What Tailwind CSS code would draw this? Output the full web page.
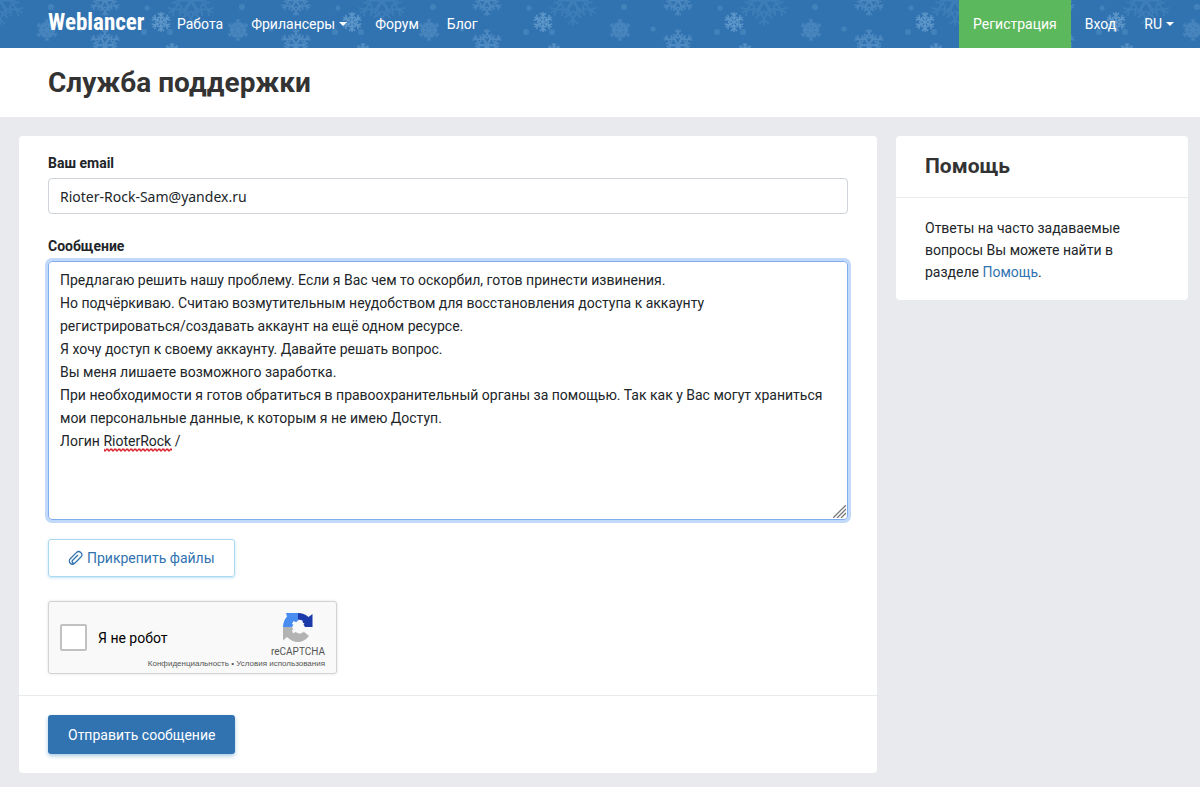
<!DOCTYPE html>
<html lang="ru">
<head>
<meta charset="utf-8">
<meta name="viewport" content="width=device-width, initial-scale=1">
<title>Служба поддержки</title>
<script src="https://cdn.jsdelivr.net/npm/@tailwindcss/browser@4"></script>
</head>
<body class="min-h-screen bg-[#e9eaee] font-[Roboto,'Noto_Sans',sans-serif] text-sm text-[#212529]">
<header class="relative h-12 overflow-hidden bg-[#3173b1] text-white">
  <svg class="absolute inset-0 h-full w-full" aria-hidden="true" fill="none" stroke="#9cc8ec">
    <defs>
      <g id="arm"><path d="M0 0V-10M0-3l-2.500-2.500M0-3l2.500-2.500M0-6l-3-3M0-6l3-3"/></g>
      <g id="star"><use href="#arm"/><use href="#arm" transform="rotate(60)"/><use href="#arm" transform="rotate(120)"/><use href="#arm" transform="rotate(180)"/><use href="#arm" transform="rotate(240)"/><use href="#arm" transform="rotate(300)"/></g>
      <g id="petal"><path d="M0-1l-3-5 3-6 3 6zM0-7l-5-4M0-7l5-4M0-12v-4M-3-6l-3-2M3-6l3-2M0-12l-3-3M0-12l3-3"/></g>
      <g id="lace"><use href="#petal"/><use href="#petal" transform="rotate(60)"/><use href="#petal" transform="rotate(120)"/><use href="#petal" transform="rotate(180)"/><use href="#petal" transform="rotate(240)"/><use href="#petal" transform="rotate(300)"/></g>
      <pattern id="snow" width="191" height="48" patternUnits="userSpaceOnUse">
        <use href="#star" transform="translate(161 22)" opacity=".42" stroke-width="1.400"/>
        <g opacity=".22"><circle cx="47" cy="30" r="8" fill="#9cc8ec" fill-opacity=".5" stroke="none"/><use href="#lace" transform="translate(47 30) scale(.7)" stroke-width="1.500"/></g>
        <use href="#lace" transform="translate(105 0)" opacity=".24" stroke-width="1.300"/>
        <use href="#lace" transform="translate(105 45)" opacity=".28" stroke-width="1.300"/>
        <use href="#lace" transform="translate(0 0) scale(1.600)" opacity=".12"/>
        <use href="#lace" transform="translate(191 0) scale(1.600)" opacity=".12"/>
        <use href="#star" transform="translate(172 50) scale(.7)" opacity=".35" stroke-width="1.500"/>
        <g fill="#9cc8ec" stroke="none" opacity=".16"><circle cx="51" cy="7" r="3"/><circle cx="80" cy="29" r="2.500"/><circle cx="144" cy="32" r="3"/><circle cx="147" cy="8" r="2.500"/><circle cx="170" cy="32" r="3"/></g>
      </pattern>
    </defs>
    <rect width="100%" height="100%" fill="url(#snow)" stroke="none"/>
  </svg>
  <nav class="relative flex h-full items-center pl-12 pr-3" aria-label="Главное меню">
    <a href="#" class="mr-5 w-[95px] pb-0.5 font-['Roboto_Condensed','Liberation_Sans',sans-serif] text-[23px] font-bold">Weblancer</a>
    <a href="#" class="px-3.5">Работа</a>
    <a href="#" class="flex items-center gap-1 px-3.5">Фрилансеры<svg width="8" height="4" fill="currentColor"><path d="M0 0h8L4 4z"/></svg></a>
    <a href="#" class="px-3.5">Форум</a>
    <a href="#" class="px-3.5">Блог</a>
    <a href="#" class="ml-auto flex h-full items-center bg-[#5cb85c] px-3.5">Регистрация</a>
    <a href="#" class="px-3.5">Вход</a>
    <button type="button" class="flex items-center gap-1 px-3.5">RU<svg width="8" height="4" fill="currentColor"><path d="M0 0h8L4 4z"/></svg></button>
  </nav>
</header>

<div class="flex h-[69px] items-center bg-white px-12">
  <h1 class="text-[28px] font-bold text-[#333]">Служба поддержки</h1>
</div>

<div class="flex items-start gap-[19px] pb-3.5 pl-[19px] pr-3 pt-[19px]">
  <main class="min-w-0 flex-1 rounded bg-white">
    <form>
      <div class="px-[29px] pb-[21px] pt-[17px]">
        <label for="email" class="mb-1 block font-bold leading-[21px]">Ваш email</label>
        <input id="email" type="email" value="Rioter-Rock-Sam@yandex.ru" class="block h-9 w-full rounded border border-[#ced4da] px-[11px] font-['Noto_Sans',sans-serif]">
        <label for="message" class="mb-1 mt-[22px] block font-bold leading-[21px]">Сообщение</label>
        <div class="relative">
          <textarea id="message" spellcheck="false" class="block h-[259px] w-full resize-none overflow-hidden rounded border border-[#80acec] px-[11px] py-[7px] leading-[23px] ring-3 ring-[#c1d9fb] outline-none">Предлагаю решить нашу проблему. Если я Вас чем то оскорбил, готов принести извинения.
Но подчёркиваю. Считаю возмутительным неудобством для восстановления доступа к аккаунту
регистрироваться/создавать аккаунт на ещё одном ресурсе.
Я хочу доступ к своему аккаунту. Давайте решать вопрос.
Вы меня лишаете возможного заработка.
При необходимости я готов обратиться в правоохранительный органы за помощью. Так как у Вас могут храниться мои персональные данные, к которым я не имею Доступ.
Логин RioterRock /</textarea>
          <svg class="pointer-events-none absolute left-14 top-[187px]" width="68" height="4" aria-hidden="true"><defs><pattern id="wave" width="4" height="4" patternUnits="userSpaceOnUse"><path d="M-1 0L1 3 3 1 5 3" fill="none" stroke="#d8202a" stroke-width="1.300"/></pattern></defs><rect width="72" height="4" fill="url(#wave)"/></svg>
          <svg class="pointer-events-none absolute bottom-0.5 right-0.5" width="13" height="13" stroke="#777" stroke-width="1.300" aria-hidden="true"><path d="M0 13L13 0M4 13l9-9M8 13l5-5"/></svg>
        </div>
        <button type="button" class="mt-[19px] flex h-[38px] items-center gap-1 rounded-[3px] border border-[#a9d8f0] px-[19px] text-[#3173b1] shadow-[0_1px_3px_#bfe3f5]">
          <svg width="15" height="16" viewBox="0 0 24 24" fill="none" stroke="currentColor" stroke-width="2" stroke-linecap="round" stroke-linejoin="round" aria-hidden="true"><path d="M18.400 12.700l-7.700 7.700a5 5 0 0 1-7.100-7.100l9.900-9.900a5 5 0 0 1 7.500 6.600l-9.500 9.700a2.800 2.800 0 0 1-4-4l8-8"/></svg>
          Прикрепить файлы
        </button>
        <div class="relative mt-6 flex h-[73px] w-[289px] items-center rounded-[3px] border border-[#d3d3d3] bg-[#f9f9f9] px-[11px] shadow-[0_0_3px_#0002]">
          <input id="robot" type="checkbox" class="size-[27px] appearance-none rounded-xs border-2 border-[#c1c1c1] bg-white">
          <label for="robot" class="ml-[11px] text-sm text-black">Я не робот</label>
          <div class="ml-auto flex h-full w-[54px] flex-col items-center pt-2.5">
            <svg width="30" height="30" viewBox="0 0 30 30" aria-hidden="true"><path fill="#4a8df0" d="M3 1h12v7.500L11 12l-2 3H0q0-6 4-10.500L3 1z"/><path fill="#1c3aa9" d="M15 1q6 0 10.500 4L29.500 2v13H18l3.500-3.500L15 8.500z"/><path fill="#b3b3b3" d="M0 15h9l2 4q4 4 9 0h0l6 5q-5 6-11 6-6 0-11-5l-4 3.500z"/><path fill="#f9f9f9" d="M15 15l-6-3 1.500-3 4 2 1-3.500 4 1 .5 3.500 2 2.500-3 1.500 2 4-5 2-2-3-4 2.500-1-3.500z"/></svg>
            <span class="text-[10px] leading-[20px] text-[#555]">reCAPTCHA</span>
          </div>
          <div class="absolute bottom-[3px] right-[11px] whitespace-nowrap font-['Liberation_Sans',sans-serif] text-[8px] leading-[12px] text-[#555]"><a href="#">Конфиденциальность</a> • <a href="#">Условия использования</a></div>
        </div>
      </div>
      <div class="border-t border-[#e9eaee] px-[29px] pb-[19px] pt-[19px]">
        <button type="submit" class="h-[39px] rounded-[3px] bg-[#3173b1] px-5 text-white shadow-[0_2px_4px_#a8c9e3]">Отправить сообщение</button>
      </div>
    </form>
  </main>
  <aside class="w-[292px] shrink-0 rounded bg-white">
    <h2 class="border-b border-[#e9eaee] px-[29px] py-[17px] text-[21px] font-bold leading-[27px] text-[#333]">Помощь</h2>
    <p class="px-[29px] pb-[17px] pt-[19px] leading-[22px]">Ответы на часто задаваемые вопросы Вы можете найти в разделе <a href="#" class="text-[#3173b1]">Помощь</a>.</p>
  </aside>
</div>
</body>
</html>
